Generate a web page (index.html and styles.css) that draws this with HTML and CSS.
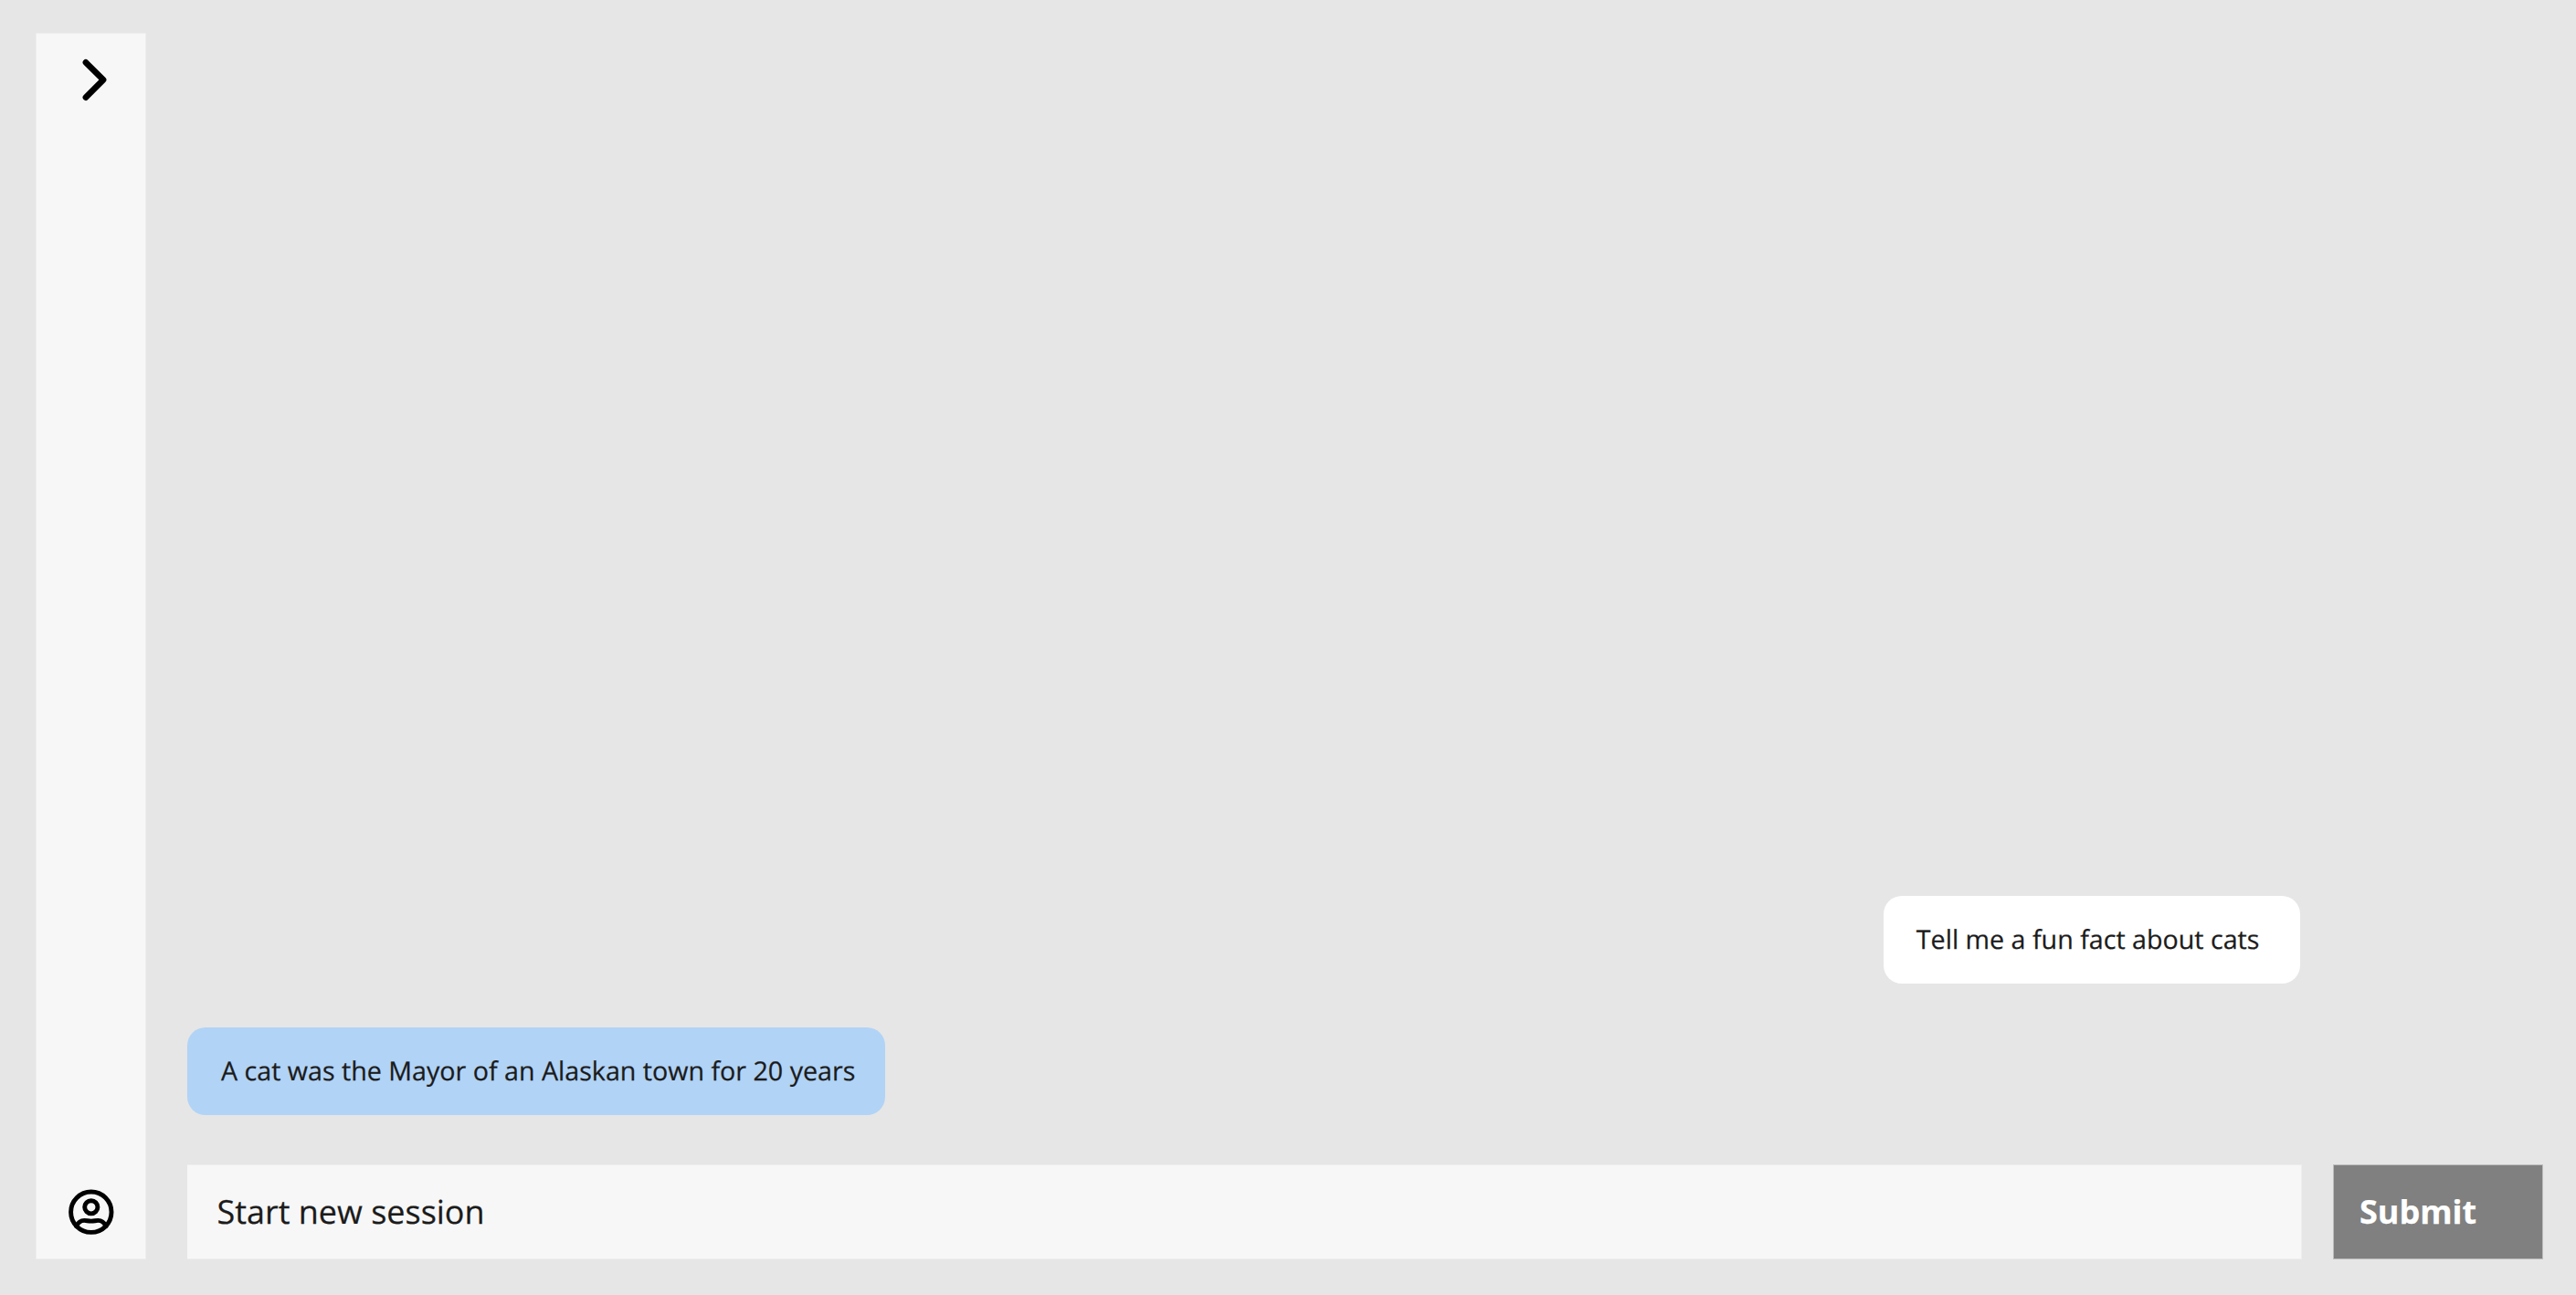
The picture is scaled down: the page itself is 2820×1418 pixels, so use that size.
FILE: index.html
```
<!DOCTYPE html>
<html lang="en">
<head>
  <meta charset="utf-8">
  <title>Chat</title>
  <link rel="stylesheet" href="styles.css">
</head>
<body>
  <div class="app">
    <nav class="sidebar">
      <button class="icon-button" aria-label="Expand">
        <svg class="chevron" viewBox="0 0 34 52">
          <path d="M7.9 7.3 27.1 26.4 7.9 45.7"/>
        </svg>
      </button>
      <button class="icon-button" aria-label="Account">
        <svg class="account" viewBox="0 0 52 52">
          <circle cx="25.8" cy="26.2" r="22.2"/>
          <circle cx="25.8" cy="20.8" r="7.1"/>
          <path d="M9.6 41.6C11.4 37.8 14.6 35.4 18.2 35.4C20.8 35.4 22.6 36.1 25.8 36.1S30.8 35.4 33.4 35.4C37 35.4 40.2 37.8 42 41.6"/>
        </svg>
      </button>
    </nav>
    <main class="chat">
      <div class="messages">
        <p class="bubble user">Tell me a fun fact about cats</p>
        <p class="bubble bot">A cat was the Mayor of an Alaskan town for 20 years</p>
      </div>
      <form class="composer">
        <div class="prompt">Start new session</div>
        <button class="submit" type="button">Submit</button>
      </form>
    </main>
  </div>
</body>
</html>
```

FILE: styles.css
```
* {
  box-sizing: border-box;
}

body {
  margin: 0;
  background: #e6e6e6;
  color: #1b1b1b;
  font-family: "Open Sans", "Noto Sans", sans-serif;
  text-rendering: geometricPrecision;
  -webkit-text-stroke: 0.25px;
}

.app {
  display: flex;
  gap: 45px;
  height: 1418px;
  padding: 36px 36px 39px 39px;
}

.sidebar {
  display: flex;
  flex-direction: column;
  justify-content: space-between;
  width: 121px;
  padding: 24px 0 25px 34px;
  border: 1px solid #eee;
  background: #f7f7f7;
}

.icon-button {
  display: block;
  padding: 0;
  border: 0;
  background: none;
  text-align: left;
}

.icon-button svg {
  display: block;
  fill: none;
  stroke: #000;
  stroke-linecap: round;
  stroke-linejoin: round;
}

.chevron {
  width: 34px;
  height: 52px;
  margin-left: 12px;
  stroke-width: 6.6;
}

.account {
  width: 52px;
  height: 52px;
  stroke-width: 4.9;
}

.chat {
  display: flex;
  flex: 1;
  flex-direction: column;
  gap: 54px;
}

.messages {
  display: flex;
  flex: 1;
  flex-direction: column;
  justify-content: flex-end;
  gap: 48.5px;
  width: 2315px;
}

.bubble {
  height: 96px;
  margin: 0;
  border-radius: 20px;
  font-size: 28.65px;
  line-height: 96px;
  white-space: nowrap;
}

.user {
  align-self: flex-end;
  width: 456.5px;
  margin-right: 2px;
  padding-left: 36.3px;
  background: #fff;
}

.bot {
  align-self: flex-start;
  width: 764px;
  padding-left: 37px;
  background: #b1d3f6;
}

.composer {
  display: flex;
  gap: 34px;
  height: 104px;
}

.prompt {
  flex: 1;
  padding-left: 32.5px;
  border: solid #eee;
  border-width: 1px 1px 1px 0;
  background: #f7f7f7;
  font-size: 35.95px;
  line-height: 102px;
}

.submit {
  width: 230px;
  padding: 0 0 0 28px;
  border: 1px solid #bcbcbc;
  background: #808080;
  color: #fff;
  font: 700 36px/102px "Open Sans", "Noto Sans", sans-serif;
  text-align: left;
}
```
